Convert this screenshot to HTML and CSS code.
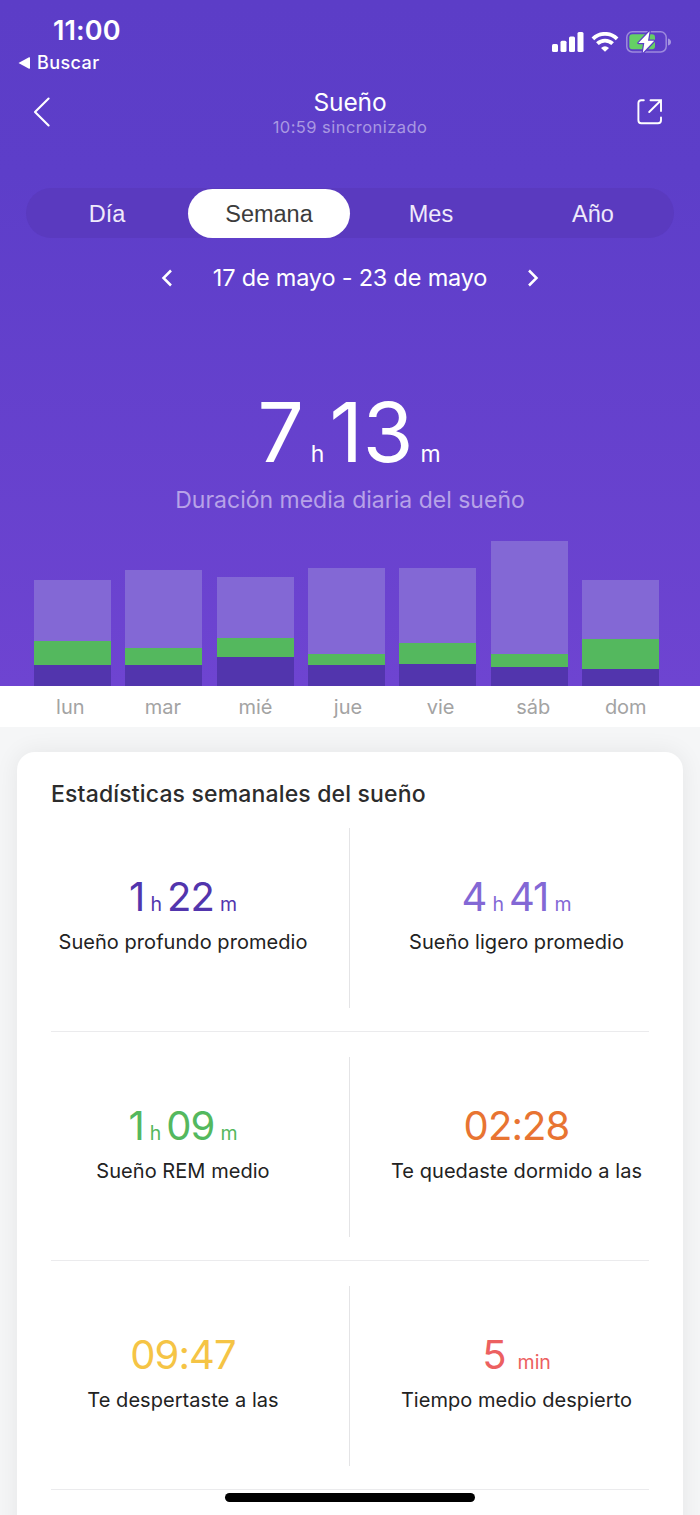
FILE: index.html
```
<!DOCTYPE html>
<html lang="es">
<head>
    <meta charset="UTF-8">
    <meta name="viewport" content="width=device-width, initial-scale=1.0">
    <title>Sueño</title>
    <link rel="stylesheet" href="styles.css">
</head>
<body>
    <div class="hero">
        <div class="status-bar">
            <div class="status-left">
                <div class="clock">11:00</div>
                <div class="back-app">
                    <svg width="12" height="12" viewBox="0 0 12 12"><path d="M0.5 6 L11 0.3 Q12 0 12 1 V11 Q12 12 11 11.7 Z" fill="#fff"/></svg>
                    <span>Buscar</span>
                </div>
            </div>
            <div class="status-icons">
                <svg width="32" height="20" viewBox="0 0 32 20" fill="#fff">
                    <rect x="0" y="12" width="6" height="8" rx="1.5"/>
                    <rect x="8.5" y="8.7" width="6" height="11.3" rx="1.5"/>
                    <rect x="17" y="4.5" width="6" height="15.5" rx="1.5"/>
                    <rect x="25.5" y="0" width="6" height="20" rx="1.5"/>
                </svg>
                <svg class="wifi" width="28" height="20" viewBox="0 0 28 20" fill="none" stroke="#fff" stroke-width="3.8">
                    <path d="M1.9 6.8 A17.2 17.2 0 0 1 26.1 6.8"/>
                    <path d="M6.4 11.7 A10.8 10.8 0 0 1 21.6 11.7"/>
                    <path d="M10 15.9 Q14 12.8 18 15.9 L14 19.8 Z" fill="#fff" stroke="none"/>
                </svg>
                <svg class="battery" width="46" height="24" viewBox="0 0 46 24">
                    <rect x="0.8" y="1.8" width="39.4" height="20.2" rx="5.5" fill="none" stroke="#fff" stroke-opacity="0.4" stroke-width="1.5"/>
                    <path d="M42 8.5 Q45 9.5 45 12 Q45 14.5 42 15.5 Z" fill="#fff" fill-opacity="0.45"/>
                    <rect x="3.3" y="4.3" width="25.7" height="15" rx="3" fill="#65cf65"/>
                    <path d="M23.6 1.2 L12.4 13 H18.3 L16.8 22.8 L28.2 10.8 H22 Z" fill="#fff" stroke="#5c3dc7" stroke-width="2.4" paint-order="stroke" stroke-linejoin="round"/>
                </svg>
            </div>
        </div>

        <header class="nav">
            <svg class="nav-back" width="18" height="30" viewBox="0 0 18 30" fill="none" stroke="#fff" stroke-width="2.1" stroke-linecap="round" stroke-linejoin="round"><path d="M15.6 1.5 L2 15 L15.6 28.5"/></svg>
            <div class="nav-title">
                <h1>Sueño</h1>
                <p>10:59 sincronizado</p>
            </div>
            <svg width="26" height="26" viewBox="0 0 26 26" fill="none" stroke="#fff" stroke-width="1.9" stroke-linecap="round">
                <path d="M6.8 1.3 H4.2 Q1.4 1.3 1.4 4.1 V21.2 Q1.4 24.2 4.2 24.2 H21 Q24 24.2 24 21.2 V18.4"/>
                <path d="M13.5 1.3 H24 V12 M23.8 1.5 L12.2 13"/>
            </svg>
        </header>

        <nav class="tabs">
            <a>Día</a>
            <a class="active">Semana</a>
            <a>Mes</a>
            <a>Año</a>
        </nav>

        <div class="period">
            <svg width="12" height="18" viewBox="0 0 12 18" fill="none" stroke="#fff" stroke-width="2.5"><path d="M10 1.5 L2.5 9 L10 16.5"/></svg>
            <span>17 de mayo - 23 de mayo</span>
            <svg width="12" height="18" viewBox="0 0 12 18" fill="none" stroke="#fff" stroke-width="2.5"><path d="M2 1.5 L9.5 9 L2 16.5"/></svg>
        </div>

        <div class="total"><b>7</b><i>h</i><b>13</b><i>m</i></div>
        <p class="total-label">Duración media diaria del sueño</p>

        <!-- segment heights in px: light, REM, deep -->
        <div class="chart">
            <div class="bar"><div class="light" style="height: 61px"></div><div class="rem" style="height: 23.5px"></div><div class="deep" style="height: 21.5px"></div></div>
            <div class="bar"><div class="light" style="height: 78px"></div><div class="rem" style="height: 16.5px"></div><div class="deep" style="height: 21.5px"></div></div>
            <div class="bar"><div class="light" style="height: 61.5px"></div><div class="rem" style="height: 19px"></div><div class="deep" style="height: 29px"></div></div>
            <div class="bar"><div class="light" style="height: 85.5px"></div><div class="rem" style="height: 11px"></div><div class="deep" style="height: 21.5px"></div></div>
            <div class="bar"><div class="light" style="height: 74.5px"></div><div class="rem" style="height: 21px"></div><div class="deep" style="height: 22.5px"></div></div>
            <div class="bar"><div class="light" style="height: 112.5px"></div><div class="rem" style="height: 13.5px"></div><div class="deep" style="height: 19px"></div></div>
            <div class="bar"><div class="light" style="height: 59px"></div><div class="rem" style="height: 29.5px"></div><div class="deep" style="height: 17.5px"></div></div>
        </div>
    </div>

    <div class="days">
        <span>lun</span>
        <span>mar</span>
        <span>mié</span>
        <span>jue</span>
        <span>vie</span>
        <span>sáb</span>
        <span>dom</span>
    </div>

    <section class="card">
        <h2>Estadísticas semanales del sueño</h2>
        <div class="row">
            <div class="stat">
                <div class="value deep-text"><b>1</b><i>h</i><b>22</b><i>m</i></div>
                <p>Sueño profundo promedio</p>
            </div>
            <div class="stat">
                <div class="value light-text"><b>4</b><i>h</i><b>41</b><i>m</i></div>
                <p>Sueño ligero promedio</p>
            </div>
        </div>
        <div class="row">
            <div class="stat">
                <div class="value rem-text"><b>1</b><i>h</i><b>09</b><i>m</i></div>
                <p>Sueño REM medio</p>
            </div>
            <div class="stat">
                <div class="value asleep-text"><b>02:28</b></div>
                <p>Te quedaste dormido a las</p>
            </div>
        </div>
        <div class="row">
            <div class="stat">
                <div class="value wake-text"><b>09:47</b></div>
                <p>Te despertaste a las</p>
            </div>
            <div class="stat">
                <div class="value awake-text"><b>5</b><i class="min">min</i></div>
                <p>Tiempo medio despierto</p>
            </div>
        </div>
    </section>

    <div class="home-indicator"></div>
</body>
</html>
```
FILE: styles.css
```
* {
    box-sizing: border-box;
    margin: 0;
    padding: 0;
}

body {
    position: relative;
    width: 700px;
    height: 1515px;
    overflow: hidden;
    background-color: #f5f6f7;
    font-family: Inter, "Liberation Sans", sans-serif;
    color: #222;
}

svg {
    display: block;
}

b, i {
    font-weight: 400;
    font-style: normal;
}

.hero {
    height: 686px;
    background: linear-gradient(#5c3dc7, #5d3ec9 25%, #6e44d1);
    color: #fff;
    display: flex;
    flex-direction: column;
}

.status-bar {
    height: 78px;
    padding: 14px 28px 0 18px;
    display: flex;
    justify-content: space-between;
    align-items: flex-start;
}

.clock {
    padding-left: 35px;
    font-size: 27px;
    line-height: 33px;
    font-weight: 600;
    letter-spacing: 0.1px;
}

.back-app {
    display: flex;
    align-items: center;
    gap: 7px;
    margin-top: 4px;
    font-size: 18px;
    line-height: 24px;
    font-weight: 500;
    letter-spacing: 0.4px;
}

.status-icons {
    display: flex;
    align-items: center;
    padding-top: 16px;
}

.wifi {
    margin-left: 7px;
}

.battery {
    margin-left: 7px;
}

.nav {
    height: 66px;
    padding: 9px 37px 0 33px;
    display: flex;
    justify-content: space-between;
    align-items: flex-start;
}

.nav > svg {
    margin-top: 12px;
}

.nav > .nav-back {
    margin-top: 10px;
    margin-right: 12px;
}

.nav-title {
    text-align: center;
}

.nav-title h1 {
    font-size: 24.5px;
    line-height: 30px;
    font-weight: 400;
    letter-spacing: -0.1px;
}

.nav-title p {
    font-size: 16.5px;
    line-height: 20px;
    letter-spacing: 0.45px;
    color: #a998e2;
}

.tabs {
    display: flex;
    height: 50px;
    margin: 44px 26px 0;
    padding-top: 1px;
    border-radius: 25px;
    background-color: #5a3abf;
    font-family: "Liberation Sans", Arial, sans-serif;
    font-size: 23.5px;
    line-height: 51px;
}

.tabs a {
    flex: 1;
    height: 49px;
    text-align: center;
    border-radius: 25px;
    color: #efeafb;
}

.tabs .active {
    background-color: #fff;
    color: #3c3c3c;
}

.period {
    display: flex;
    justify-content: center;
    align-items: center;
    gap: 40px;
    margin-top: 24px;
    font-size: 23.5px;
    line-height: 32px;
    letter-spacing: -0.2px;
}

.total {
    display: flex;
    justify-content: center;
    align-items: baseline;
    height: 100px;
    margin-top: 89px;
    margin-bottom: 1px;
    padding-left: 3px;
    line-height: 100px;
}

.total b {
    font-size: 82px;
}

.total i {
    margin: 0 5px 0 7px;
    font-size: 23px;
}

.total-label {
    text-align: center;
    font-size: 23px;
    line-height: 32px;
    color: #b7a2e8;
}

.chart {
    display: flex;
    justify-content: space-between;
    align-items: flex-end;
    margin-top: auto;
    padding: 0 41px 0 34px;
}

.bar {
    width: 77px;
}

.light {
    background-color: #8368d5;
}

.rem {
    background-color: #54b85e;
}

.deep {
    background-color: #5235ad;
}

.days {
    display: flex;
    height: 41px;
    padding: 0 28px 0 24px;
    background-color: #fff;
    color: #a3a3a3;
    font-size: 20px;
    line-height: 43px;
}

.days span {
    flex: 1;
    text-align: center;
}

.card {
    height: 800px;
    margin: 25px 17px 0;
    padding: 26px 34px 0;
    border-radius: 18px;
    background-color: #fff;
    box-shadow: 0 0 24px rgba(0, 0, 0, 0.07);
}

.card h2 {
    height: 24.6px;
    font-size: 23px;
    line-height: 32px;
    font-weight: 500;
    letter-spacing: 0.16px;
    color: #2c2c2c;
}

.row {
    display: flex;
    height: 229.2px;
    padding: 25px 0 23px;
    border-bottom: 1px solid #ebebed;
}

.stat {
    width: 50%;
    padding-top: 44px;
    text-align: center;
}

.stat:first-child {
    padding-right: 34px;
    border-right: 1px solid #e4e4e6;
}

.stat:last-child {
    padding-left: 34px;
}

.value {
    display: flex;
    justify-content: center;
    align-items: baseline;
    height: 50px;
    line-height: 50px;
}

.value b {
    font-size: 40px;
    letter-spacing: -0.9px;
}

.value i {
    margin: 0 5px 0 6px;
    font-size: 19.5px;
}

.value i:last-child {
    margin-right: 0;
}

.value .min {
    margin-left: 12px;
}

.stat p {
    font-size: 20px;
    line-height: 41px;
    letter-spacing: 0.05px;
    white-space: nowrap;
}

.deep-text {
    color: #5235ad;
}

.light-text {
    color: #8368d5;
}

.rem-text {
    color: #54b85e;
}

.asleep-text {
    color: #e87432;
}

.wake-text {
    color: #f5c445;
}

.awake-text {
    color: #ec6060;
}

/* sits on top of the scrolled content */
.home-indicator {
    position: absolute;
    left: 225px;
    bottom: 13px;
    width: 250px;
    height: 9px;
    border-radius: 5px;
    background-color: #000;
}
```
